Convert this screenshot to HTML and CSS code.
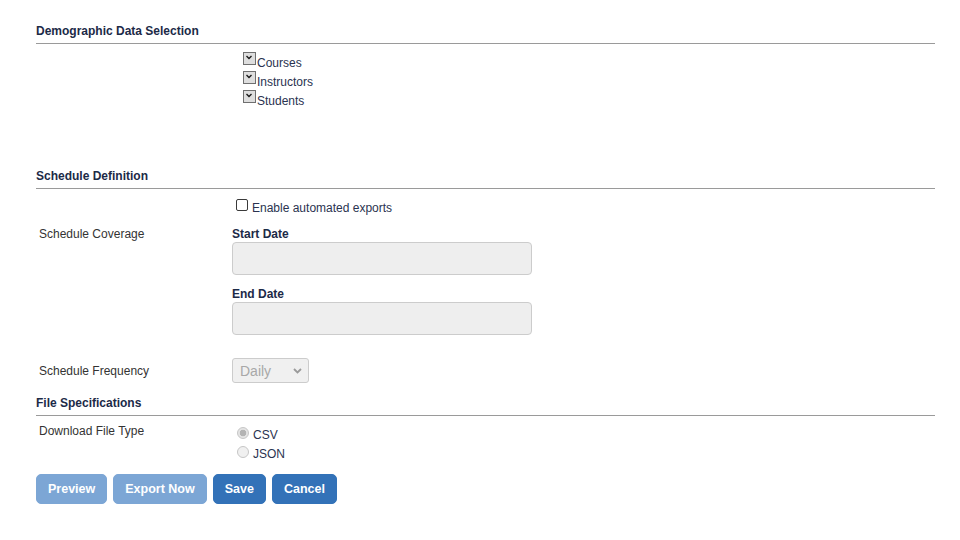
FILE: index.html
```html
<!DOCTYPE html>
<html lang="en">
<head>
<meta charset="utf-8">
<title>Export Settings</title>
<link rel="stylesheet" href="styles.css">
</head>
<body>
<div class="page">
  <section class="section">
    <h2 class="section-title">Demographic Data Selection</h2>
    <div class="row">
      <div class="row-label"></div>
      <ul class="legacy-list">
        <li class="legacy-item"><span class="legacy-box"><svg viewBox="0 0 13 13" width="13" height="13"><rect x="0.5" y="0.5" width="12" height="12" fill="#dedede" stroke="#6f6f6f"/><path d="M3.5 4 L6 6.5 L8.5 4" fill="none" stroke="#1a1a1a" stroke-width="1.4"/></svg></span>Courses</li>
        <li class="legacy-item"><span class="legacy-box"><svg viewBox="0 0 13 13" width="13" height="13"><rect x="0.5" y="0.5" width="12" height="12" fill="#dedede" stroke="#6f6f6f"/><path d="M3.5 4 L6 6.5 L8.5 4" fill="none" stroke="#1a1a1a" stroke-width="1.4"/></svg></span>Instructors</li>
        <li class="legacy-item"><span class="legacy-box"><svg viewBox="0 0 13 13" width="13" height="13"><rect x="0.5" y="0.5" width="12" height="12" fill="#dedede" stroke="#6f6f6f"/><path d="M3.5 4 L6 6.5 L8.5 4" fill="none" stroke="#1a1a1a" stroke-width="1.4"/></svg></span>Students</li>
      </ul>
    </div>
  </section>

  <section class="section section-schedule">
    <h2 class="section-title">Schedule Definition</h2>
    <div class="row row-enable">
      <div class="row-label"></div>
      <label class="enable"><input type="checkbox" class="check"><span class="enable-text">Enable automated exports</span></label>
    </div>
    <div class="row row-coverage">
      <div class="row-label">Schedule Coverage</div>
      <div class="field">
        <label class="field-label">Start Date</label>
        <input type="text" class="text-input" disabled>
        <label class="field-label field-label-next">End Date</label>
        <input type="text" class="text-input" disabled>
      </div>
    </div>
    <div class="row row-frequency">
      <div class="row-label">Schedule Frequency</div>
      <div class="select-wrap">
        <select class="select" disabled><option>Daily</option></select>
        <svg class="select-chevron" viewBox="0 0 9 6" width="9" height="6"><path d="M1 1 L4.5 4.5 L8 1" fill="none" stroke="#9a9a9a" stroke-width="1.8"/></svg>
      </div>
    </div>
  </section>

  <section class="section section-file">
    <h2 class="section-title">File Specifications</h2>
    <div class="row row-download">
      <div class="row-label">Download File Type</div>
      <div class="radio-list">
        <label class="radio-item"><input type="radio" name="ft" class="radio" checked disabled><span class="radio-text">CSV</span></label>
        <label class="radio-item"><input type="radio" name="ft" class="radio" disabled><span class="radio-text">JSON</span></label>
      </div>
    </div>
  </section>

  <div class="actions">
    <button class="btn btn-disabled" type="button">Preview</button>
    <button class="btn btn-disabled" type="button">Export Now</button>
    <button class="btn" type="button">Save</button>
    <button class="btn" type="button">Cancel</button>
  </div>
</div>
</body>
</html>
```

FILE: styles.css
```css
* { box-sizing: border-box; }

body {
  margin: 0;
  background: #ffffff;
  font-family: "Liberation Sans", Arial, sans-serif;
  font-size: 12px;
  color: #333333;
}

.page {
  width: 960px;
  padding: 23px 25px 0 36px;
}

.section-title {
  margin: 0;
  font-size: 12px;
  font-weight: bold;
  line-height: 14px;
  color: #1c2a47;
  padding-top: 1px;
  padding-bottom: 5px;
  border-bottom: 1px solid #9a9a9a;
}

.section-schedule { margin-top: 58px; }
.section-file { margin-top: 12px; }

.row {
  display: grid;
  grid-template-columns: 196px 1fr;
}

.row-label {
  padding-left: 3px;
  line-height: 14px;
  color: #333333;
}

/* legacy checkbox list */
.legacy-list {
  list-style: none;
  margin: 9px 0 0 0;
  padding: 0 0 0 11px;
}

.legacy-item {
  display: flex;
  align-items: flex-start;
  height: 19px;
  line-height: 21px;
  color: #2a3350;
}

.legacy-box {
  display: block;
  width: 13px;
  height: 13px;
  margin-top: -1px;
  margin-right: 1px;
}

.legacy-box svg { display: block; }

/* enable checkbox */
.row-enable { margin-top: 10px; }

.enable {
  display: flex;
  align-items: flex-start;
  color: #2a3350;
}

.check {
  appearance: none;
  -webkit-appearance: none;
  width: 12px;
  height: 12px;
  margin: 0 4px 0 4px;
  border: 1px solid #3a3a3a;
  border-radius: 2px;
  background: #ffffff;
}

.enable-text {
  padding-top: 2px;
  line-height: 15px;
}

/* coverage */
.row-coverage { margin-top: 11px; }

.field {
  display: flex;
  flex-direction: column;
}

.field-label {
  display: block;
  font-weight: bold;
  line-height: 14px;
  margin-bottom: 1px;
  color: #1c2a47;
}

.field-label-next { margin-top: 12px; }

.text-input {
  display: block;
  width: 300px;
  height: 33px;
  margin: 0;
  border: 1px solid #cccccc;
  border-radius: 4px;
  background: #eeeeee;
}

/* frequency */
.row-frequency {
  margin-top: 23px;
  align-items: center;
}

.select-wrap {
  position: relative;
  width: 77px;
  height: 25px;
}

.select {
  appearance: none;
  -webkit-appearance: none;
  width: 77px;
  height: 25px;
  margin: 0;
  padding: 0 0 0 7px;
  border: 1px solid #cccccc;
  border-radius: 3px;
  background: #f0f0f0;
  color: #a8a8a8;
  font-family: "Liberation Sans", Arial, sans-serif;
  font-size: 14px;
  opacity: 1;
}

.select-chevron {
  position: absolute;
  right: 7px;
  top: 10px;
  pointer-events: none;
}

/* download */
.row-download { margin-top: 8px; }

.radio-list {
  margin-top: 2px;
  display: flex;
  flex-direction: column;
}

.radio-item {
  display: flex;
  align-items: flex-start;
  height: 18.5px;
  line-height: 19px;
  color: #2a3350;
}

.radio {
  appearance: none;
  -webkit-appearance: none;
  width: 12px;
  height: 12px;
  margin: 1px 4px 0 5px;
  border: 1px solid #c6c6c6;
  border-radius: 50%;
  background: #f0f0f0;
  opacity: 1;
}

.radio:checked {
  background: radial-gradient(circle, #b3b3b3 0 3px, #e4e4e4 3.6px);
}

/* actions */
.actions {
  margin-top: 10.5px;
  display: flex;
  gap: 6px;
}

.btn {
  height: 30px;
  margin: 0;
  padding: 1px 11px 0 11px;
  border: 1px solid #3272b8;
  border-radius: 5px;
  background: #3372b8;
  color: #ffffff;
  font-family: "Liberation Sans", Arial, sans-serif;
  font-size: 12.5px;
  font-weight: bold;
}

.btn-disabled {
  background: #7ca6d5;
  border-color: #7ca6d5;
}
```
